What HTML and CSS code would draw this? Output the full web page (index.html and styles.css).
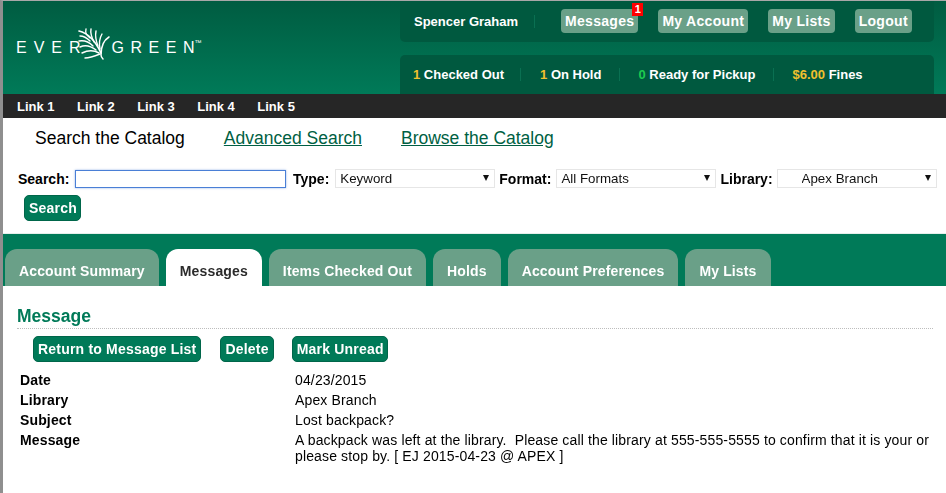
FILE: index.html
```html
<!DOCTYPE html>
<html lang="en">
<head>
<meta charset="utf-8">
<title>Evergreen - Message</title>
<link rel="stylesheet" href="styles.css">
</head>
<body>
<div class="page">
  <header class="header">
    <a class="logo" href="#">
      <span class="logo-word">EVE<span class="tight">R</span></span>
      <svg class="leaf" width="33" height="33" viewBox="0 0 33 33" fill="none" stroke="#fff" stroke-linecap="round">
        <path d="M1 3 C9 5 17 12 23 25" stroke-width="1.7"/>
        <path d="M8 1 C7 5 9 8 12 10" stroke-width="1.3"/>
        <path d="M13 1 C12 6 14 10 16 14" stroke-width="1.4"/>
        <path d="M18 3 C17 8 18 13 20 18" stroke-width="1.4"/>
        <path d="M24 6 C21 11 21 16 22 21" stroke-width="1.4"/>
        <path d="M31 9 C26 12 23 19 23 27 C23 29 24 30 25 31" stroke-width="1.5"/>
        <path d="M2 8 C6 8 9 10 12 13" stroke-width="1.4"/>
        <path d="M1 13 C6 12 11 14 15 18" stroke-width="1.4"/>
        <path d="M2 19 C8 16 13 18 18 22" stroke-width="1.5"/>
        <path d="M4 25 C10 22 16 22 21 25" stroke-width="1.5"/>
        <path d="M7 30 C11 30 17 28 22 26" stroke-width="1.4"/>
      </svg>
      <span class="logo-word logo-word-b">GREE<span class="tight">N</span></span><span class="logo-tm">™</span>
    </a>
    <div class="panels">
      <div class="panel panel-user">
        <span class="user-name">Spencer Graham</span>
        <span class="divider"></span>
        <nav class="user-links">
          <a class="user-btn user-btn-msg" href="#">Messages<span class="badge">1</span></a>
          <a class="user-btn" href="#">My Account</a>
          <a class="user-btn" href="#">My Lists</a>
          <a class="user-btn" href="#">Logout</a>
        </nav>
      </div>
      <div class="panel panel-stats">
        <span class="stat stat-a"><b class="gold">1</b> Checked Out</span>
        <span class="divider"></span>
        <span class="stat stat-b"><b class="gold">1</b> On Hold</span>
        <span class="divider"></span>
        <span class="stat stat-c"><b class="lime">0</b> Ready for Pickup</span>
        <span class="divider"></span>
        <span class="stat stat-d"><b class="gold">$6.00</b> Fines</span>
      </div>
    </div>
  </header>

  <nav class="linkbar">
    <a href="#">Link 1</a>
    <a href="#">Link 2</a>
    <a href="#">Link 3</a>
    <a href="#">Link 4</a>
    <a href="#">Link 5</a>
  </nav>

  <div class="search-tabs">
    <span class="search-tab">Search the Catalog</span>
    <a class="search-tab" href="#">Advanced Search</a>
    <a class="search-tab" href="#">Browse the Catalog</a>
  </div>

  <form class="search-form">
    <div class="search-row">
      <label class="field-label label-search" for="q">Search:</label>
      <input class="search-input" id="q" type="text" autofocus>
      <label class="field-label label-type">Type:</label>
      <span class="select-wrap"><select class="select"><option>Keyword</option></select></span>
      <label class="field-label label-format">Format:</label>
      <span class="select-wrap"><select class="select"><option>All Formats</option></select></span>
      <label class="field-label label-library">Library:</label>
      <span class="select-wrap"><select class="select select-indent"><option>Apex Branch</option></select></span>
    </div>
    <button class="btn btn-search" type="button">Search</button>
  </form>

  <div class="tabband">
    <a class="tab" href="#">Account Summary</a>
    <a class="tab tab-active" href="#">Messages</a>
    <a class="tab" href="#">Items Checked Out</a>
    <a class="tab" href="#">Holds</a>
    <a class="tab" href="#">Account Preferences</a>
    <a class="tab" href="#">My Lists</a>
  </div>

  <main class="content">
    <h2 class="title">Message</h2>
    <div class="actions">
      <button class="btn" type="button">Return to Message List</button>
      <button class="btn" type="button">Delete</button>
      <button class="btn btn-mark" type="button">Mark Unread</button>
    </div>
    <dl class="details">
      <dt>Date</dt><dd>04/23/2015</dd>
      <dt>Library</dt><dd>Apex Branch</dd>
      <dt>Subject</dt><dd>Lost backpack?</dd>
      <dt>Message</dt><dd>A backpack was left at the library.&nbsp; Please call the library at 555-555-5555 to confirm that it is your or please stop by. [ EJ 2015-04-23 @ APEX ]</dd>
    </dl>
  </main>
</div>
</body>
</html>
```
FILE: styles.css
```css
* { box-sizing: border-box; }
html, body { margin: 0; height: 100%; }
body {
  font-family: "Liberation Sans", Arial, sans-serif;
  font-size: 14px;
  color: #000;
  background: #fff;
  overflow: hidden;
}
a { text-decoration: none; color: inherit; }
.page {
  height: 493px;
  border-left: 3px solid #8f8f8f;
  border-top: 1px solid #a8a8a8;
}

/* header */
.header {
  height: 93px;
  display: flex;
  justify-content: space-between;
  padding-right: 12px;
  background: linear-gradient(#005c41, #007a58);
}
.logo {
  display: flex;
  align-items: center;
  height: 33px;
  margin: 27px 0 0 13px;
  color: #fff;
}
.logo-word {
  font-size: 16px;
  letter-spacing: 7px;
  margin-top: 7px;
}
.logo-word-b { letter-spacing: 6.5px; margin-left: 1px; }
.tight { letter-spacing: 0; }
.leaf { margin-left: -3px; flex: none; }
.logo-tm { font-size: 7px; margin: 0 0 5px 0; }
.panels {
  width: 534px;
  display: flex;
  flex-direction: column;
  justify-content: space-between;
}
.panel {
  display: flex;
  align-items: center;
  background: #00593f;
  border-radius: 0 0 5px 5px;
  color: #fff;
  font-weight: bold;
  font-size: 13px;
}
.panel-user { height: 41px; padding-left: 14px; }
.panel-stats { height: 39px; border-radius: 5px 5px 0 0; padding-left: 13px; }
.divider {
  width: 1px;
  height: 13px;
  background: #0a7052;
}
.user-name { margin-right: 16px; }
.user-links {
  display: flex;
  gap: 20px;
  margin: 0 0 2px 26px;
}
.user-btn {
  position: relative;
  height: 24px;
  line-height: 24px;
  padding: 0 4px;
  background: #6aa088;
  border-radius: 4px;
  font-size: 14px;
  letter-spacing: 0.3px;
}
.badge {
  position: absolute;
  top: -6px;
  right: -5px;
  width: 11px;
  height: 13px;
  background: #f00;
  color: #fff;
  font-size: 11px;
  line-height: 13px;
  text-align: center;
  letter-spacing: 0;
}
.stat { white-space: pre; }
.gold { color: #f0c02e; }
.lime { color: #1ecb4f; }
.stat-a { margin-right: 16px; }
.stat-b { margin: 0 18px 0 19px; }
.stat-c { margin: 0 18px 0 18px; }
.stat-d { margin-left: 18px; }

/* dark link bar */
.linkbar {
  height: 24px;
  display: flex;
  align-items: center;
  gap: 22.5px;
  padding-left: 14px;
  background: #262626;
  color: #fff;
  font-weight: bold;
  font-size: 13px;
}

/* search */
.search-tabs {
  display: flex;
  gap: 39px;
  padding: 9px 0 0 32px;
  height: 42px;
  font-size: 17.5px;
  line-height: 22px;
}
.search-tabs a {
  color: #005f43;
  text-decoration: underline;
}
.search-form { height: 73px; padding: 9px 0 0 15px; }
.search-row {
  display: flex;
  align-items: center;
  height: 19px;
}
.field-label { font-weight: bold; }
.label-search { width: 57px; }
.label-type { margin: 0 6px 0 7px; }
.label-format { margin: 0 5px 0 4px; }
.label-library { margin: 0 4px 0 4px; }
.search-input {
  width: 211px;
  height: 18px;
  padding: 0 2px;
  border: 1px solid #4a7fd6;
  outline: none;
  box-shadow: 0 0 2px rgba(74, 127, 214, .6);
  font: inherit;
}
.select-wrap {
  position: relative;
  display: block;
  width: 160px;
  height: 19px;
}
.select-wrap::after {
  content: "";
  position: absolute;
  top: 6px;
  right: 6px;
  border-left: 3.5px solid transparent;
  border-right: 3.5px solid transparent;
  border-top: 6px solid #111;
  pointer-events: none;
}
.select {
  appearance: none;
  display: block;
  width: 100%;
  height: 100%;
  padding: 0 0 0 4px;
  border: 1px solid #e6e6e6;
  border-radius: 0;
  background: #fff;
  color: #111;
  font: 13.33px "Liberation Sans", Arial, sans-serif;
}
.select-indent { padding-left: 24px; }
.btn {
  display: block;
  height: 26px;
  padding: 0 4px;
  background: #007a58;
  border: 1px solid #00664a;
  border-radius: 5px;
  color: #fff;
  font: bold 14px "Liberation Sans", Arial, sans-serif;
  letter-spacing: 0.2px;
}
.btn-search { margin: 7px 0 0 6px; width: 57px; }
.btn-mark { margin-left: -1px; width: 96px; white-space: nowrap; }

/* tabs */
.tabband {
  height: 53px;
  display: flex;
  align-items: flex-end;
  gap: 7px;
  padding-left: 2px;
  background: #007a58;
  border-top: 1px solid #e6efec;
}
.tab {
  height: 37px;
  padding: 14px 14px 0;
  background: #6aa088;
  border-radius: 12px 12px 0 0;
  color: #fff;
  font-weight: bold;
  line-height: 16px;
  letter-spacing: 0.14px;
}
.tab-active { background: #fff; color: #2b2b2b; }

/* content */
.content { padding: 20px 13px 0 14px; }
.title {
  margin: 0;
  height: 23px;
  font-size: 17.5px;
  line-height: 20px;
  color: #007a58;
  border-bottom: 1px dotted #bdbdbd;
}
.actions {
  display: flex;
  gap: 19px;
  margin: 7px 0 0 16px;
}
.details {
  display: grid;
  grid-template-columns: 275px 1fr;
  margin: 8px 0 0 3px;
  line-height: 20px;
  letter-spacing: 0.14px;
}
.details dt { font-weight: bold; }
.details dd { margin: 0; line-height: 16px; padding-top: 2px; padding-bottom: 2px; }
```
